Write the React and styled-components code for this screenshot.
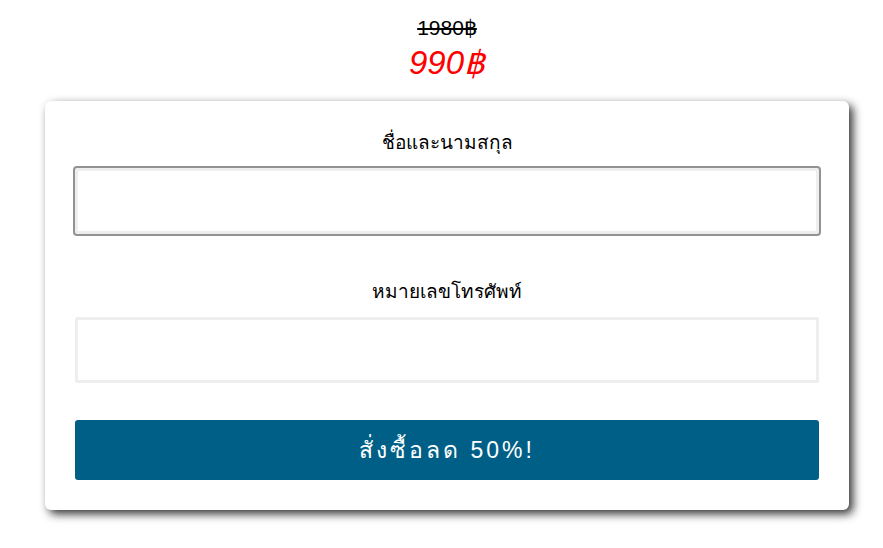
import React from 'react';
import styled, { createGlobalStyle } from 'styled-components';

const GlobalStyle = createGlobalStyle`
  body {
    margin: 0;
    background: #fff;
    font-family: "Liberation Sans", Arial, sans-serif;
    color: #000;
  }
`;

const Page = styled.div`
  width: 804px;
  margin-left: 45px;
  padding: 16px 0 30px;
`;

const PriceBox = styled.div`
  display: flex;
  flex-direction: column;
  align-items: center;
  margin-bottom: 17px;
`;

const OldPrice = styled.span`
  font-size: 21px;
  line-height: 24px;
  text-decoration: line-through;
`;

const NewPrice = styled.span`
  font-size: 33px;
  line-height: 42px;
  font-style: italic;
  color: #ff0000;
  margin-top: 2px;
`;

const Card = styled.form`
  background: #fff;
  border-radius: 6px;
  padding: 30px;
  box-shadow: 4px 4px 10px rgba(0, 0, 0, 0.8);
  display: flex;
  flex-direction: column;
`;

const Field = styled.div`
  display: flex;
  flex-direction: column;
  margin-bottom: ${(p) => p.$space}px;
`;

const Label = styled.label`
  text-align: center;
  font-size: 19px;
  line-height: 24px;
  margin-bottom: 13px;
`;

const Input = styled.input`
  box-sizing: border-box;
  height: 66px;
  width: 100%;
  border: 3px solid #eeeeee;
  border-radius: 2px;
  background: #fff;
  font-size: 18px;
  padding: 0 12px;
  outline: ${(p) => (p.$active ? '2px solid #929292' : 'none')};
  outline-offset: 0;
`;

const Submit = styled.button`
  height: 60px;
  border: none;
  border-radius: 3px;
  background: #005f87;
  color: #fff;
  font-family: "Liberation Sans", Arial, sans-serif;
  font-size: 23px;
  letter-spacing: 3px;
  cursor: pointer;
`;

export default function App() {
  return (
    <>
      <GlobalStyle />
      <Page>
        <PriceBox>
          <OldPrice>1980฿</OldPrice>
          <NewPrice>990฿</NewPrice>
        </PriceBox>
        <Card onSubmit={(e) => e.preventDefault()}>
          <Field $space={46}>
            <Label>ชื่อและนามสกุล</Label>
            <Input type="text" $active />
          </Field>
          <Field $space={37}>
            <Label>หมายเลขโทรศัพท์</Label>
            <Input type="tel" />
          </Field>
          <Submit type="submit">สั่งซื้อลด 50%!</Submit>
        </Card>
      </Page>
    </>
  );
}
